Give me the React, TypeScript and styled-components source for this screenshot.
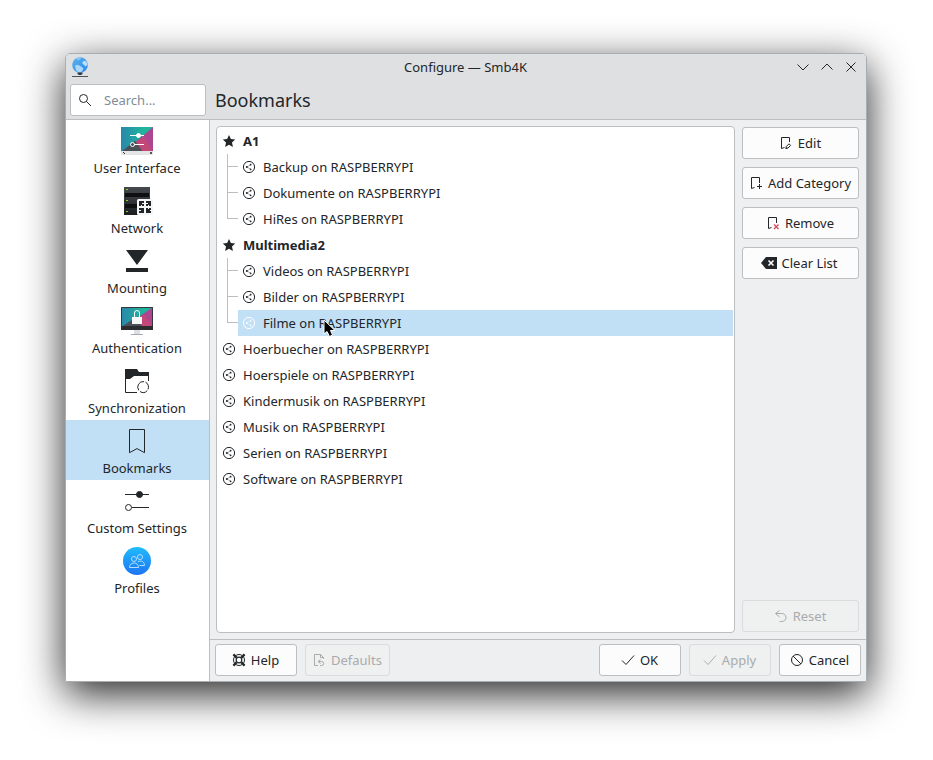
import React, { useState } from "react";
import styled, { createGlobalStyle, css } from "styled-components";

const ink = "#232629";
const line = "#bcbec0";
const highlight = "#c1dff5";

const GlobalStyle = createGlobalStyle`
  * { box-sizing: border-box; }
  body { margin: 0; background: #fff; }
  body, button, input {
    font-family: "Noto Sans", "Open Sans", sans-serif;
    font-size: 13px;
    line-height: 18px;
    color: ${ink};
  }
  ul { list-style: none; margin: 0; padding: 0; }
  svg { display: block; flex: none; }
`;

const Desktop = styled.div`
  display: flex;
  min-height: 100vh;
  padding: 53px 66px 78px 65px;
`;

const Window = styled.main`
  flex: 1;
  display: flex;
  flex-direction: column;
  min-width: 0;
  overflow: hidden;
  background: #eeeff1;
  border: 1px solid #a9adb0;
  border-radius: 5px 5px 0 0;
`;

const Shadow = styled.div`
  flex: 1;
  display: flex;
  min-width: 0;
  border-radius: 5px 5px 0 0;
  box-shadow: 0 12px 42px rgba(0, 0, 0, 0.86);
`;

const Header = styled.header`
  background: #dee0e2;
  border-bottom: 1px solid ${line};
`;

const TitleBar = styled.div`
  display: grid;
  grid-template-columns: 1fr auto 1fr;
  align-items: center;
  height: 26px;
  padding: 0 7px 0 6px;
`;

const WindowTitle = styled.span``;

const WindowControls = styled.div`
  display: flex;
  justify-content: flex-end;
  gap: 8px;
`;

const ControlButton = styled.button`
  width: 16px;
  height: 16px;
  padding: 0;
  border: 0;
  background: none;
`;

const PageBar = styled.div`
  display: flex;
  align-items: center;
  gap: 9px;
  padding: 4px 4px 3px;
`;

const SearchBox = styled.label`
  display: flex;
  align-items: center;
  gap: 11px;
  width: 136px;
  height: 32px;
  padding: 0 6px;
  background: #fff;
  border: 1px solid ${line};
  border-radius: 3px;
`;

const SearchInput = styled.input`
  flex: 1;
  min-width: 0;
  padding: 0;
  border: 0;
  outline: 0;
  background: none;
  &::placeholder { color: #7f8c9a; opacity: 1; }
`;

const PageTitle = styled.h1`
  margin: 0;
  font-size: 18px;
  line-height: 26px;
  font-weight: 400;
`;

const Body = styled.div`
  flex: 1;
  display: flex;
  min-height: 0;
`;

const Sidebar = styled.nav`
  width: 144px;
  flex: none;
  background: #fff;
  border-right: 1px solid ${line};
`;

const SidebarItem = styled.button<{ $active: boolean }>`
  display: flex;
  flex-direction: column;
  align-items: center;
  gap: 2px;
  width: 100%;
  height: 60px;
  padding: 5px 1px 3px 0;
  border: 0;
  white-space: nowrap;
  background: ${(p) => (p.$active ? highlight : "transparent")};
`;

const Content = styled.section`
  flex: 1;
  display: flex;
  flex-direction: column;
  min-width: 0;
`;

const Page = styled.div`
  flex: 1;
  display: flex;
  gap: 7px;
  padding: 6px 7px 6px 6px;
`;

const Tree = styled.ul`
  flex: 1;
  min-width: 0;
  && { padding: 1px; }
  background: #fff;
  border: 1px solid ${line};
  border-radius: 4px;
`;

const TreeItem = styled.li``;

const TreeLine = styled.div`
  display: flex;
  height: 26px;
`;

const Connector = styled.span<{ $last: boolean }>`
  flex: none;
  width: 11px;
  margin-left: 9px;
  background:
    linear-gradient(${line}, ${line}) 0 0 / 1px ${(p) => (p.$last ? "13px" : "100%")} no-repeat,
    linear-gradient(${line}, ${line}) 0 12px / 100% 1px no-repeat;
`;

const TreeLabel = styled.button<{ $selected?: boolean; $bold?: boolean }>`
  position: relative;
  flex: 1;
  display: flex;
  align-items: center;
  gap: 6px;
  min-width: 0;
  padding: 0 3px;
  border: 0;
  text-align: left;
  background: transparent;
  ${(p) => p.$bold && css`font-weight: 700;`}
  ${(p) => p.$selected && css`
    background: ${highlight};
    svg { color: #fff; }
  `}
`;

const Pointer = styled.span`
  position: absolute;
  left: 85px;
  top: 9px;
`;

const Actions = styled.div`
  display: flex;
  flex-direction: column;
  gap: 8px;
  width: 117px;
  padding: 1px 0;
`;

const Spacer = styled.div`
  flex: 1;
`;

const PushButton = styled.button`
  display: flex;
  align-items: center;
  justify-content: center;
  gap: 4px;
  min-width: 82px;
  height: 32px;
  padding: 0 7px 0 5px;
  white-space: nowrap;
  background: #fcfcfc;
  border: 1px solid ${line};
  border-radius: 3px;
  &:disabled {
    color: #a9abac;
    background: #eff0f0;
    border-color: #d9dbdc;
  }
`;

const Footer = styled.footer`
  display: flex;
  gap: 8px;
  padding: 4px 5px 5px;
  border-top: 1px solid ${line};
`;

const Glyph = ({ children, size = 16 }: { children: React.ReactNode; size?: number }) => (
  <svg width={size} height={size} viewBox={`0 0 ${size} ${size}`} fill="none" stroke="currentColor" aria-hidden="true">
    {children}
  </svg>
);

const AppIcon = () => (
  <svg width="16" height="20" viewBox="0 0 16 20" aria-hidden="true">
    <defs>
      <linearGradient id="globe" x1="0" y1="0" x2="1" y2="1">
        <stop offset="0" stopColor="#5db4ea" />
        <stop offset="1" stopColor="#2a86ee" />
      </linearGradient>
    </defs>
    <circle cx="8" cy="8" r="7.8" fill="url(#globe)" />
    <path d="M3 8.5l3-.8 3 1.800 2.500 2-1.500 3-2.500 1-3-1.500L3.500 11z" fill="#a9d8fa" />
    <path d="M12 3.500l2.500 1.200 1 3-2 1.800-2-2-1.500-1.500z" fill="#b9e0fb" />
    <path d="M4 1.500L8 .3l1.500 1L6 3.500z" fill="#8ccaf5" />
    <path d="M5.500 15.500h5v1.500l-1.500 1h-2l-1.500-1z" fill="#2f3a44" />
    <path d="M0 19.500h16" stroke="#4c5358" />
  </svg>
);

const wallpaper = (id: string, y: number, h: number) => (
  <>
    <defs>
      <linearGradient id={id} x1="0" y1="0" x2="1" y2="0">
        <stop offset="0" stopColor="#2a87ab" />
        <stop offset="0.7" stopColor="#1fb59b" />
      </linearGradient>
    </defs>
    <path d={`M0 ${y}h32v${h}H0z`} fill={`url(#${id})`} />
    <path d={`M32 ${y}v${h}H20L14 ${y + h * 0.62}z`} fill="#ad4590" />
    <path d={`M14 ${y + h * 0.62}L23 ${y + h * 0.38} 32 ${y + h}H18z`} fill="#c94a6c" opacity="0.7" />
    <path d={`M0 ${y + h}L14 ${y + h * 0.55} 22 ${y + h}z`} fill="#4b5157" />
  </>
);

const InterfaceIcon = () => (
  <svg width="32" height="32" viewBox="0 0 32 32" aria-hidden="true">
    {wallpaper("wp-interface", 2, 25)}
    <path d="M0 26h32v4H0z" fill="#e3e5e6" />
    <path d="M2 27l2 2" stroke="#333" />
    <path d="M29 27h2v2h-2z" fill="#555" />
    <g stroke="#fff" fill="none">
      <path d="M9 10.500h14M13 19.500h10" />
      <circle cx="17.500" cy="10.500" r="2" fill="#fff" />
      <circle cx="11.500" cy="19.500" r="2" />
    </g>
  </svg>
);

const NetworkIcon = () => (
  <svg width="32" height="32" viewBox="0 0 32 32" aria-hidden="true">
    <defs>
      <linearGradient id="rack" x1="0" y1="0" x2="0" y2="1">
        <stop offset="0" stopColor="#454a4f" />
        <stop offset="1" stopColor="#1c1e20" />
      </linearGradient>
    </defs>
    <path d="M3 2h26v28H3z" fill="url(#rack)" />
    <path d="M4 8h24v4H4zM4 19h24v4H4z" fill="#0e0f10" />
    <path d="M5 4.500h2M5 15.500h2M5 26.500h2" stroke="#86d315" />
    <rect x="16" y="14" width="16" height="16" rx="1.500" fill="#f4f5f5" />
    <path
      d="M18 16h5v2h-2v1h2v2h-2v-1h-1v1h-2zM25 16h5v5h-2v-1h-1v1h-2v-2h2v-1h-2zM18 23h5v5h-5v-2h2v-1h-2zM25 23h2v1h1v-1h2v2h-1v1h1v2h-5z"
      fill={ink}
    />
  </svg>
);

const MountIcon = () => (
  <svg width="32" height="32" viewBox="0 0 32 32" fill={ink} aria-hidden="true">
    <path d="M5 5h22L16 20zM5 23h22v4H5z" />
  </svg>
);

const AuthIcon = () => (
  <svg width="32" height="32" viewBox="0 0 32 32" aria-hidden="true">
    {wallpaper("wp-auth", 2, 20)}
    <path d="M.5 2.500h31v22H.5z" fill="none" stroke="#33373b" />
    <path d="M0 21h32v4H0z" fill="#2b2e31" />
    <path d="M13 25h6v4h-6z" fill="#dde0e2" />
    <path d="M10 29h12v1H10z" fill="#a3abb1" />
    <path d="M13.500 12.500V8a2.500 2.500 0 0 1 5 0v4.500" fill="none" stroke="#fff" />
    <path d="M11 12h10v7H11z" fill="#f7f7f7" />
  </svg>
);

const SyncIcon = () => (
  <svg width="32" height="32" viewBox="0 0 32 32" aria-hidden="true">
    <path d="M4 4h12l2 3h10v4H13l-4 3H4z" fill={ink} />
    <path d="M4.500 13v14.500H16M27.500 10v6" fill="none" stroke={ink} />
    <g fill="none" stroke={ink}>
      <path d="M17.800 25.300a5.500 5.500 0 0 1 5.200-8.700" />
      <path d="M24.500 17.100a5.500 5.500 0 0 1 2.500 7.200" />
      <path d="M26.300 25.500a5.500 5.500 0 0 1-7.300 1" />
    </g>
  </svg>
);

const BookmarkIcon = () => (
  <svg width="32" height="32" viewBox="0 0 32 32" fill="none" stroke={ink} aria-hidden="true">
    <path d="M8.500 4.500h15v23.200L16 23.600l-7.500 4.100z" />
  </svg>
);

const SettingsIcon = () => (
  <svg width="32" height="32" viewBox="0 0 32 32" fill="none" stroke={ink} aria-hidden="true">
    <path d="M4 9.500h24M11 22.500h17" />
    <circle cx="18.500" cy="9.500" r="3" fill={ink} />
    <circle cx="7.500" cy="22.500" r="3" />
  </svg>
);

const ProfilesIcon = () => (
  <svg width="32" height="32" viewBox="0 0 32 32" aria-hidden="true">
    <defs>
      <linearGradient id="profile" x1="0" y1="0" x2="0" y2="1">
        <stop offset="0" stopColor="#20bcfb" />
        <stop offset="1" stopColor="#1c74f4" />
      </linearGradient>
    </defs>
    <circle cx="16" cy="16" r="14" fill="url(#profile)" />
    <g fill="none" stroke="#b5defd">
      <circle cx="13" cy="14" r="2.500" />
      <path d="M8.500 22.500c0-3 2-4.500 4.500-4.500s4.500 1.500 4.500 4.500z" />
      <circle cx="19" cy="12" r="2.500" />
      <path d="M17 16.600c3.500-1.500 6.500.4 6.500 3.900h-5" />
    </g>
  </svg>
);

const StarIcon = () => (
  <Glyph>
    <path d="M8 2l1.900 4 4.300.5-3.200 3 .9 4.400L8 11.700l-3.900 2.200.9-4.400-3.200-3L6.100 6z" fill="currentColor" stroke="none" />
  </Glyph>
);

const ShareIcon = () => (
  <Glyph>
    <circle cx="8" cy="8" r="5.600" />
    <path d="M6 8l3.500-2.200M6 8l3.500 2.200" strokeWidth="0.400" />
    <g fill="currentColor" stroke="none">
      <circle cx="5.800" cy="8" r="1" />
      <circle cx="9.600" cy="5.700" r="0.900" />
      <circle cx="9.600" cy="10.300" r="0.900" />
    </g>
  </Glyph>
);

const SearchIcon = () => (
  <Glyph>
    <circle cx="6.500" cy="6.500" r="4" />
    <path d="M9.500 9.500l4.500 4.500" />
  </Glyph>
);

const EditIcon = () => (
  <Glyph>
    <path d="M6.500 12.500l-3 1V2.500h8V7" />
    <path d="M8 13.500l.3-2 2.700-2.700 1.600 1.600-2.700 2.700zM7.500 14l1.500-1.500" />
  </Glyph>
);

const AddIcon = () => (
  <Glyph>
    <path d="M6.500 12.500l-3 1V2.500h8V8" />
    <path d="M9 11.500h5M11.500 9v5" />
  </Glyph>
);

const RemoveIcon = () => (
  <Glyph>
    <path d="M6.500 12.500l-3 1V2.500h8V8" />
    <path d="M9 9.500l4.500 4.500M13.500 9.500L9 14" stroke="#da4453" strokeWidth="1.200" />
  </Glyph>
);

const ClearIcon = () => (
  <Glyph>
    <path d="M5 2h11v12H5L0 8z" fill="currentColor" stroke="none" />
    <path d="M7.500 5.500l5 5M12.500 5.500l-5 5" stroke="#fff" strokeWidth="1.600" />
  </Glyph>
);

const ResetIcon = () => (
  <Glyph>
    <path d="M6.500 2.500l-4 3 4 3.500M2.800 5.500h6c2.500 0 4.200 1.700 4.200 4s-1.700 4-4.200 4H6.500" />
  </Glyph>
);

const HelpIcon = () => (
  <Glyph>
    <circle cx="8" cy="8" r="5.500" />
    <circle cx="8" cy="8" r="2.800" strokeWidth="1.200" />
    <path d="M2.400 2.400l3.200 3.200M13.600 2.400l-3.200 3.200M2.400 13.600l3.200-3.200M13.600 13.600l-3.200-3.200" strokeWidth="2.200" />
  </Glyph>
);

const DefaultsIcon = () => (
  <Glyph>
    <path d="M7 13.500H3.500v-11h6l3 3V7M9.500 2.500v3h3" />
    <path d="M9.500 7.500L7 9.500l2.500 2M7.500 9.500h3.200a2 2 0 0 1 0 4H9" />
  </Glyph>
);

const CheckIcon = () => (
  <Glyph>
    <path d="M2 8.500l4 4 8-9" />
  </Glyph>
);

const CancelIcon = () => (
  <Glyph>
    <circle cx="8" cy="8" r="5.500" />
    <path d="M4 4l8 8" />
  </Glyph>
);

const PointerIcon = () => (
  <svg width="14" height="20" viewBox="0 0 14 20" aria-hidden="true">
    <path d="M1 1v14l3-2.500 2.500 5 3-1.500-2-4.500H12z" fill="#000" stroke="#fff" strokeWidth="1" />
  </svg>
);

const sections = [
  { name: "User Interface", Icon: InterfaceIcon },
  { name: "Network", Icon: NetworkIcon },
  { name: "Mounting", Icon: MountIcon },
  { name: "Authentication", Icon: AuthIcon },
  { name: "Synchronization", Icon: SyncIcon },
  { name: "Bookmarks", Icon: BookmarkIcon },
  { name: "Custom Settings", Icon: SettingsIcon },
  { name: "Profiles", Icon: ProfilesIcon },
];

const categories = [
  { name: "A1", shares: ["Backup", "Dokumente", "HiRes"] },
  { name: "Multimedia2", shares: ["Videos", "Bilder", "Filme"] },
];

const looseShares = ["Hoerbuecher", "Hoerspiele", "Kindermusik", "Musik", "Serien", "Software"];

export default function App() {
  const [section, setSection] = useState("Bookmarks");
  const [selected, setSelected] = useState("Filme");

  const share = (name: string) => (
    <TreeLabel $selected={selected === name} onClick={() => setSelected(name)}>
      <ShareIcon />
      {`${name} on RASPBERRYPI`}
      {name === "Filme" && (
        <Pointer>
          <PointerIcon />
        </Pointer>
      )}
    </TreeLabel>
  );

  return (
    <>
      <GlobalStyle />
      <Desktop>
        <Shadow>
          <Window>
            <Header>
              <TitleBar>
                <AppIcon />
                <WindowTitle>Configure — Smb4K</WindowTitle>
                <WindowControls>
                  <ControlButton aria-label="Minimize">
                    <Glyph><path d="M2.500 5.500L8 11l5.500-5.500" /></Glyph>
                  </ControlButton>
                  <ControlButton aria-label="Maximize">
                    <Glyph><path d="M2.500 10.500L8 5l5.500 5.500" /></Glyph>
                  </ControlButton>
                  <ControlButton aria-label="Close">
                    <Glyph><path d="M3.500 3.500l9 9M12.500 3.500l-9 9" /></Glyph>
                  </ControlButton>
                </WindowControls>
              </TitleBar>
              <PageBar>
                <SearchBox>
                  <SearchIcon />
                  <SearchInput type="text" placeholder="Search..." aria-label="Search" />
                </SearchBox>
                <PageTitle>{section}</PageTitle>
              </PageBar>
            </Header>
            <Body>
              <Sidebar>
                {sections.map(({ name, Icon }) => (
                  <SidebarItem key={name} $active={section === name} onClick={() => setSection(name)}>
                    <Icon />
                    {name}
                  </SidebarItem>
                ))}
              </Sidebar>
              <Content>
                <Page>
                  <Tree>
                    {categories.map((category) => (
                      <TreeItem key={category.name}>
                        <TreeLine>
                          <TreeLabel
                            $bold
                            $selected={selected === category.name}
                            onClick={() => setSelected(category.name)}
                          >
                            <StarIcon />
                            {category.name}
                          </TreeLabel>
                        </TreeLine>
                        <ul>
                          {category.shares.map((name, i) => (
                            <TreeItem key={name}>
                              <TreeLine>
                                <Connector $last={i === category.shares.length - 1} />
                                {share(name)}
                              </TreeLine>
                            </TreeItem>
                          ))}
                        </ul>
                      </TreeItem>
                    ))}
                    {looseShares.map((name) => (
                      <TreeItem key={name}>
                        <TreeLine>{share(name)}</TreeLine>
                      </TreeItem>
                    ))}
                  </Tree>
                  <Actions>
                    <PushButton><EditIcon />Edit</PushButton>
                    <PushButton><AddIcon />Add Category</PushButton>
                    <PushButton><RemoveIcon />Remove</PushButton>
                    <PushButton><ClearIcon />Clear List</PushButton>
                    <Spacer />
                    <PushButton disabled><ResetIcon />Reset</PushButton>
                  </Actions>
                </Page>
                <Footer>
                  <PushButton><HelpIcon />Help</PushButton>
                  <PushButton disabled><DefaultsIcon />Defaults</PushButton>
                  <Spacer />
                  <PushButton><CheckIcon />OK</PushButton>
                  <PushButton disabled><CheckIcon />Apply</PushButton>
                  <PushButton><CancelIcon />Cancel</PushButton>
                </Footer>
              </Content>
            </Body>
          </Window>
        </Shadow>
      </Desktop>
    </>
  );
}
